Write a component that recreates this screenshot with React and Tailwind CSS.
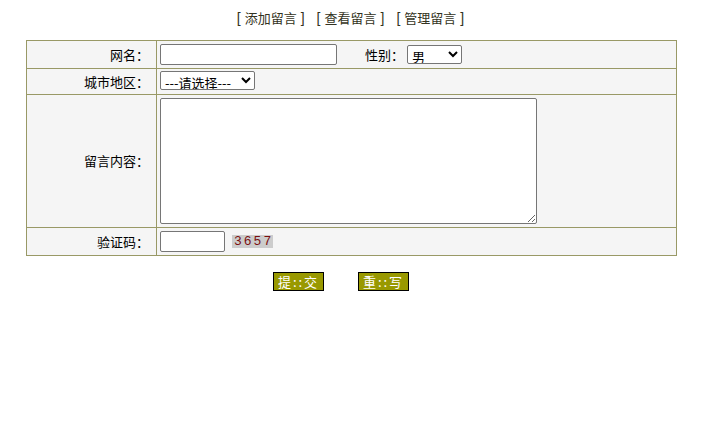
import React from 'react';

const font = { fontFamily: '"Noto Sans CJK SC", "Noto Sans", sans-serif' };

const Label = ({ children }) => (
  <td className="w-[130px] border border-[#999966] bg-[#f5f5f5] pr-[7px] text-right text-[13px] text-black">
    {children}
  </td>
);

const Field = ({ children }) => (
  <td className="border border-[#999966] bg-[#f5f5f5] pl-[3px] text-[13px] text-black">{children}</td>
);

const Captcha = () => (
  <span className="ml-[7px] inline-block bg-[#cccccc] pl-[2px] font-['Liberation_Mono',monospace] text-[13px] font-normal leading-[13px] tracking-[2px] text-[#7a1010]">
    3657
  </span>
);

const Btn = ({ children }) => (
  <button className="h-[19px] w-[51px] border border-black bg-[#999900] text-[13px] leading-[17px] tracking-[2px] text-white">
    {children}
  </button>
);

const NavLink = ({ children }) => (
  <a className="flex cursor-pointer items-center">
    <span className="font-['Liberation_Sans',sans-serif] text-[14px] font-light">[</span>
    <span className="mx-[4px]">{children}</span>
    <span className="font-['Liberation_Sans',sans-serif] text-[14px] font-light">]</span>
  </a>
);

export default function App() {
  return (
    <div className="min-h-[442px] w-[715px] bg-white text-[13px]" style={font}>
      <div className="flex justify-center gap-[12px] pt-[9px] pr-[14px] text-[13px] leading-[18px] text-[#333322]">
        <NavLink>添加留言</NavLink>
        <NavLink>查看留言</NavLink>
        <NavLink>管理留言</NavLink>
      </div>

      <table className="ml-[26px] mt-[13px] w-[651px] border-collapse border border-[#999966]">
        <tbody>
          <tr className="h-[28px]">
            <Label>网名：</Label>
            <Field>
              <div className="flex items-center">
                <input className="h-[21px] w-[177px] rounded-[2px] border border-[#767676] bg-white px-1 outline-none" />
                <span className="ml-[28px] mr-[3px]">性别：</span>
                <select className="h-[19px] w-[55px] rounded-[2px] border border-[#767676] bg-white text-[13px] leading-none">
                  <option>男</option>
                  <option>女</option>
                </select>
              </div>
            </Field>
          </tr>
          <tr className="h-[26px]">
            <Label>城市地区：</Label>
            <Field>
              <select className="h-[19px] w-[95px] rounded-[2px] border border-[#767676] bg-white text-[13px] leading-none">
                <option>---请选择---</option>
              </select>
            </Field>
          </tr>
          <tr className="h-[133px]">
            <Label>留言内容：</Label>
            <Field>
              <textarea className="block h-[126px] w-[377px] rounded-[2px] border border-[#767676] bg-white outline-none" />
            </Field>
          </tr>
          <tr className="h-[28px]">
            <Label>验证码：</Label>
            <Field>
              <div className="flex items-center">
                <input className="h-[21px] w-[65px] rounded-[2px] border border-[#767676] bg-white px-1 outline-none" />
                <Captcha />
              </div>
            </Field>
          </tr>
        </tbody>
      </table>

      <div className="ml-[273px] mt-[16px] flex gap-[34px]">
        <Btn>提::交</Btn>
        <Btn>重::写</Btn>
      </div>
    </div>
  );
}
